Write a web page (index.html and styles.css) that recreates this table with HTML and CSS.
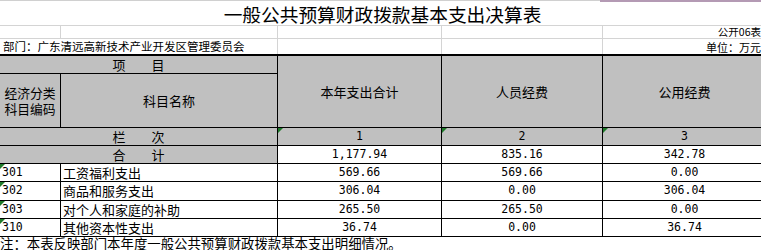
FILE: index.html
```html
<!DOCTYPE html>
<html lang="zh-CN">
<head>
<meta charset="utf-8">
<title>一般公共预算财政拨款基本支出决算表</title>
<link rel="stylesheet" href="styles.css">
</head>
<body>
<div class="sheet">
  <div class="topline"><div class="tl-left"></div><div class="tl-sel"></div></div>
  <div class="title">一般公共预算财政拨款基本支出决算表</div>
  <div class="meta">
    <div class="mc"></div>
    <div class="mc"></div>
    <div class="mc"></div>
    <div class="mc"></div>
    <div class="mc right small">公开06表</div>
    <div class="mc span2 dept">部门：广东清远高新技术产业开发区管理委员会</div>
    <div class="mc"></div>
    <div class="mc"></div>
    <div class="mc right unit">单位：万元</div>
  </div>
  <div class="grid">
    <div class="c hd span2 r1">项　　目</div>
    <div class="c hd rs2 r1">本年支出合计</div>
    <div class="c hd rs2 r1">人员经费</div>
    <div class="c hd rs2 r1">公用经费</div>
    <div class="c hd code-hd">经济分类<br>科目编码</div>
    <div class="c hd">科目名称</div>

    <div class="c hd span2">栏　　次</div>
    <div class="c hd num tri">1</div>
    <div class="c hd num tri">2</div>
    <div class="c hd num tri">3</div>

    <div class="c hd span2">合　　计</div>
    <div class="c num">1,177.94</div>
    <div class="c num">835.16</div>
    <div class="c num">342.78</div>

    <div class="c code tri">301</div>
    <div class="c name">工资福利支出</div>
    <div class="c num">569.66</div>
    <div class="c num">569.66</div>
    <div class="c num">0.00</div>

    <div class="c code tri">302</div>
    <div class="c name">商品和服务支出</div>
    <div class="c num">306.04</div>
    <div class="c num">0.00</div>
    <div class="c num">306.04</div>

    <div class="c code tri">303</div>
    <div class="c name">对个人和家庭的补助</div>
    <div class="c num">265.50</div>
    <div class="c num">265.50</div>
    <div class="c num">0.00</div>

    <div class="c code tri">310</div>
    <div class="c name">其他资本性支出</div>
    <div class="c num">36.74</div>
    <div class="c num">0.00</div>
    <div class="c num">36.74</div>
  </div>
  <div class="note">注：本表反映部门本年度一般公共预算财政拨款基本支出明细情况。</div>
</div>
</body>
</html>
```

FILE: styles.css
```css
html, body {
  margin: 0;
  padding: 0;
  background: #ffffff;
}

body {
  width: 761px;
  height: 250px;
  overflow: hidden;
  font-family: "Noto Sans CJK SC", "Noto Sans", sans-serif;
  color: #000000;
}

.sheet {
  width: 765px;
}

.topline {
  display: flex;
  height: 2px;
}

.tl-left {
  width: 600px;
  border-top: 1px solid #d0d0d0;
}

.tl-sel {
  flex: 1;
  background: #b49ab4;
}

.title {
  height: 23px;
  line-height: 23px;
  font-size: 18.7px;
  text-align: center;
  border-bottom: 1px solid #d4d4d4;
  white-space: nowrap;
}

.meta {
  display: grid;
  grid-template-columns: 60px 216px 163px 160px 163px;
  grid-template-rows: 12px 15px;
  gap: 1px;
  background: #d4d4d4;
}

.mc {
  background: #ffffff;
  font-size: 11px;
  line-height: 12px;
  white-space: nowrap;
}

.mc.small {
  font-size: 10.5px;
  line-height: 12px;
}

.mc.unit {
  line-height: 15px;
  padding-top: 1px;
  box-sizing: border-box;
}

.mc.right {
  text-align: right;
  padding-right: 5px;
}

.mc.dept {
  font-size: 11.5px;
  line-height: 15px;
  padding-left: 3px;
}

.span2 {
  grid-column: span 2;
}

.grid {
  display: grid;
  grid-template-columns: 60px 216px 163px 160px 163px;
  grid-template-rows: 17px 53px 17px 17px 17px 18px 17px 17px;
  gap: 1px;
  background: #000000;
  border-top: 2px solid #000000;
  border-bottom: 1px solid #000000;
}

.c {
  position: relative;
  background: #ffffff;
  font-size: 13px;
  line-height: 17px;
  white-space: nowrap;
  overflow: hidden;
}

.hd {
  background: #c0c0c0;
  display: flex;
  align-items: center;
  justify-content: center;
  text-align: center;
}

.rs2 {
  grid-row: span 2;
}

.code-hd {
  line-height: 16px;
  font-size: 12.8px;
}

.num {
  font-family: "DejaVu Sans Mono", monospace;
  font-size: 11.5px;
  text-align: center;
}

.code {
  font-family: "DejaVu Sans Mono", monospace;
  font-size: 11.5px;
  padding-left: 2px;
}

.name {
  padding-left: 2px;
}

.tri::before {
  content: "";
  position: absolute;
  top: 0;
  left: 0;
  width: 0;
  height: 0;
  border-top: 5px solid #1e7a2a;
  border-right: 5px solid transparent;
}

.note {
  height: 13px;
  line-height: 13px;
  font-size: 13.4px;
  white-space: nowrap;
}
```
